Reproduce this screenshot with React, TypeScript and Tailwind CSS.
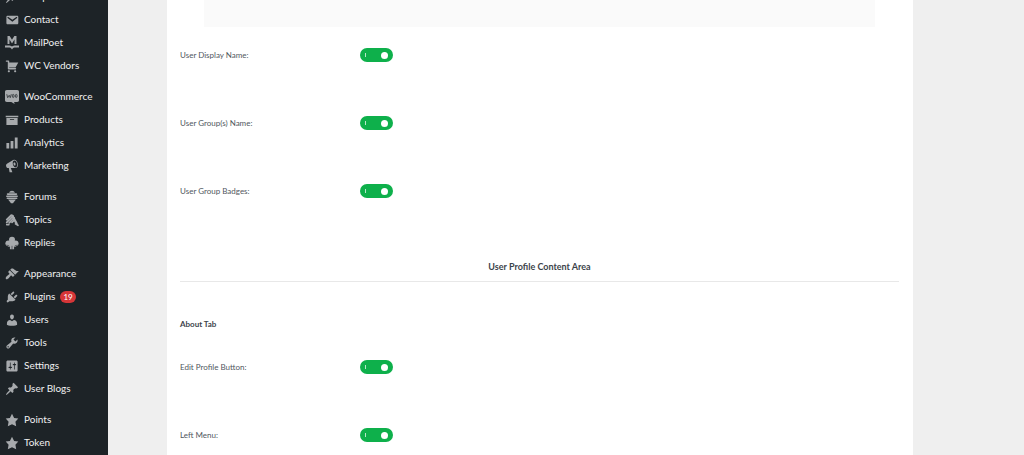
import { useState } from "react"
import type { ReactNode } from "react"

interface MenuItem {
  label: string
  icon: ReactNode
  count?: number
}

const icons = {
  email: <path d="M3.87 4h13.25C18.37 4 19 4.59 19 5.79v8.42c0 1.19-.63 1.79-1.88 1.79H3.87c-1.25 0-1.88-.6-1.88-1.79V5.79c0-1.2.63-1.79 1.88-1.79zm6.62 8.6l6.74-5.53c.24-.2.43-.66.13-1.07-.29-.41-.82-.42-1.17-.17l-5.7 3.86L4.8 5.83c-.35-.25-.88-.24-1.17.17-.3.41-.11.87.13 1.07z" />,
  mailpoet: (
    <g fill="none" stroke="currentColor">
      <path strokeWidth="2.8" d="M5 11.5V0l5 8 5-8v11.5" />
      <path strokeWidth="2.6" d="M0 15h6.5c1.6 0 2.6.7 3.5 2 .9-1.3 1.9-2 3.5-2H20" />
    </g>
  ),
  cart: <path d="M6 13h9c.55 0 1 .45 1 1s-.45 1-1 1H5c-.55 0-1-.45-1-1V4H2c-.55 0-1-.45-1-1s.45-1 1-1h3c.55 0 1 .45 1 1v2h13l-4 7H6v1zm-.5 3c.83 0 1.5.67 1.5 1.5S6.33 19 5.5 19 4 18.33 4 17.5 4.67 16 5.5 16zm9 0c.83 0 1.5.67 1.5 1.5s-.67 1.5-1.5 1.5-1.5-.67-1.5-1.5.67-1.5 1.5-1.5z" />,
  woo: (
    <>
      <path d="M2.5 0h15C19 0 20 1 20 2.500v12c0 1.500-1 2.500-2.500 2.500H13l.8 3L9 17H2.500C1 17 0 16 0 14.500v-12C0 1 1 0 2.500 0z" />
      <g fill="none" stroke="#1d2327" strokeWidth="1" strokeLinejoin="round">
        <path d="M2.500 6l1.300 5L6 7.500 7.500 11 9 6" />
        <ellipse cx="11.700" cy="8.500" rx="1.300" ry="2.300" />
        <ellipse cx="16" cy="8.500" rx="1.300" ry="2.300" />
      </g>
    </>
  ),
  archive: <path d="M19 4v2H1V4h18zM2 7h16v10H2V7zm11 3V9H7v1h6z" />,
  chart: <path d="M18 18V2h-4v16h4zm-6 0V7H8v11h4zm-6 0v-8H2v8h4z" />,
  megaphone: <path d="M18.15 5.94c.46 1.62.38 3.22-.02 4.48-.42 1.28-1.26 2.18-2.3 2.48-.16.06-.26.06-.4.06-.06.02-.12.02-.18.02-.06.02-.14.02-.22.02h-6.8l2.22 5.5c.02.14-.06.26-.14.34-.08.1-.24.16-.34.16H6.95c-.1 0-.26-.06-.34-.16-.08-.08-.16-.2-.14-.34l-1-5.5H4.25l-.02-.02c-.5.06-1.08-.18-1.54-.62s-.88-1.08-1.06-1.88c-.24-.8-.2-1.56-.02-2.2.18-.62.58-1.08 1.06-1.3l.02-.02 9-5.4c.1-.06.18-.1.24-.16.06-.04.14-.08.24-.12.16-.08.28-.12.5-.18 1.04-.3 2.24.1 3.22.98s1.84 2.24 2.26 3.86zm-2.58 5.98h-.02c.4-.1.74-.34 1.04-.7.58-.7.86-1.76.86-3.04 0-.64-.1-1.3-.28-1.98-.34-1.36-1.02-2.5-1.78-3.24s-1.68-1.1-2.46-.88c-.82.22-1.4.96-1.7 2-.32 1.04-.28 2.36.06 3.72.38 1.36 1 2.5 1.8 3.24.78.74 1.62 1.1 2.48.88zm-2.54-7.08c.22-.04.42-.02.62.04.38.16.76.48 1.02 1s.42 1.2.42 1.78c0 .3-.04.56-.12.8-.18.48-.44.84-.86.94-.34.1-.8-.06-1.14-.4s-.64-.86-.78-1.5c-.18-.62-.12-1.24.02-1.72s.48-.84.82-.94z" />,
  forums: <path d="M10 1c2 0 3.500 1.200 4.200 2.800H5.800C6.500 2.200 8 1 10 1zM4 4.500h12c1 0 1.500.5 1.500 1.300S17 7 16 7H4c-1 0-1.500-.4-1.500-1.200S3 4.500 4 4.500zM2.500 7.700h15c.7 0 1 .5 1 1.100s-.4 1.200-1 1.200h-15c-.6 0-1-.6-1-1.200s.3-1.100 1-1.100zM3.200 10.700h13.600c.6 0 1 .5 1 1.100s-.4 1.200-1 1.200H3.200c-.6 0-1-.6-1-1.200s.4-1.100 1-1.100zM4.500 13.700h11C14.500 16 12 17.500 11.500 19h-3C8 17.500 5.500 16 4.500 13.700z" />,
  topics: (
    <g fill="none" stroke="currentColor" strokeLinecap="round">
      <path strokeWidth="2.600" d="M2.500 9.500l6.500-6.500M2.500 13.500l9-9M6 14l7-7" />
      <path strokeWidth="3.400" d="M10.500 4l6 11" />
      <path strokeWidth="2.400" d="M10 13.500l3-3M15 15.500l3.500 2M2.500 16.500h3" />
    </g>
  ),
  replies: (
    <>
      <circle cx="10" cy="5.500" r="4.300" />
      <circle cx="4.800" cy="10.500" r="4.200" />
      <circle cx="15.200" cy="10.500" r="4.200" />
      <path d="M6 7h8l2 8-3 .5V19H7v-3.500L4 15z" />
      <path d="M10 14v5M2 13l4 1M18 13l-4 1" stroke="#1d2327" strokeWidth=".8" />
    </>
  ),
  appearance: <path d="M14.48 11.06L7.41 3.99l1.5-1.5c.5-.56 2.3-.47 3.51.32 1.21.8 1.43 1.28 2.91 2.1 1.18.64 2.45 1.26 4.45.85zm-.71.71L6.7 4.7 4.93 6.47c-.39.39-.39 1.02 0 1.41l1.06 1.06c.39.39.39 1.03 0 1.42-.6.6-1.43 1.11-2.21 1.69-.35.26-.7.53-1.01.84C1.43 14.23.4 16.08 1.4 17.07c.99 1 2.84-.03 4.18-1.36.31-.31.58-.66.85-1.02.57-.78 1.08-1.61 1.69-2.21.39-.39 1.02-.39 1.41 0l1.06 1.06c.39.39 1.02.39 1.41 0z" />,
  plugins: <path d="M13.11 4.36L9.87 7.6 8 5.73l3.24-3.24c.35-.34 1.05-.2 1.56.32.52.51.66 1.21.31 1.55zm-8 1.77l.91-1.12 9.01 9.01-1.19.84c-.71.71-2.63 1.16-3.82 1.16H6.14L4.9 17.26c-.59.59-1.54.59-2.12 0-.59-.58-.59-1.53 0-2.12l1.24-1.24v-3.88c0-1.13.4-3.19 1.09-3.89zm7.26 3.97l3.24-3.24c.34-.35 1.04-.21 1.55.31.52.51.66 1.21.31 1.55l-3.24 3.25z" />,
  users: <path d="M10 9.250c-2.270 0-2.730-3.440-2.730-3.440C7 4.020 7.820 2 9.970 2c2.160 0 2.980 2.020 2.710 3.810 0 0-.41 3.440-2.680 3.440zm0 2.570L12.720 10c2.390 0 4.520 2.330 4.520 4.530v2.490s-3.650 1.130-7.240 1.130c-3.650 0-7.240-1.130-7.240-1.130v-2.490c0-2.250 1.940-4.480 4.470-4.480z" />,
  tools: <path d="M16.68 9.77c-1.34 1.34-3.3 1.67-4.95.99l-5.41 6.52c-.99.99-2.59.99-3.58 0s-.99-2.59 0-3.57l6.52-5.42c-.68-1.65-.35-3.61.99-4.95 1.28-1.28 3.12-1.62 4.72-1.06l-2.89 2.89 2.82 2.82 2.86-2.87c.53 1.58.18 3.39-1.08 4.65zM3.81 16.21c.4.39 1.04.39 1.43 0 .4-.4.4-1.04 0-1.43-.39-.4-1.03-.4-1.43 0-.39.39-.39 1.03 0 1.43z" />,
  settings: <path d="M18 16V4c0-1.1-.9-2-2-2H4c-1.1 0-2 .9-2 2v12c0 1.1.9 2 2 2h12c1.1 0 2-.9 2-2zM8 11h1c.55 0 1 .45 1 1s-.45 1-1 1H8v1.5c0 .28-.22.5-.5.5s-.5-.22-.5-.5V13H6c-.55 0-1-.45-1-1s.45-1 1-1h1V5.5c0-.28.22-.5.5-.5s.5.22.5.5V11zm5-2h-1c-.55 0-1-.45-1-1s.45-1 1-1h1V5.5c0-.28.22-.5.5-.5s.5.22.5.5V7h1c.55 0 1 .45 1 1s-.45 1-1 1h-1v5.5c0 .28-.22.5-.5.5s-.5-.22-.5-.5V9z" />,
  pin: <path d="M10.44 3.02l1.82-1.82 6.36 6.35-1.83 1.82c-1.05-.68-2.48-.57-3.41.36l-.75.75c-.92.93-1.04 2.35-.35 3.41l-1.83 1.82-2.41-2.41-2.8 2.79c-.42.42-3.38 2.71-3.8 2.29s1.86-3.39 2.28-3.81l2.79-2.79L4.1 9.36l1.83-1.82c1.05.69 2.48.57 3.4-.36l.75-.75c.93-.92 1.05-2.35.36-3.41z" />,
  star: <path d="M10 1l3 6 6 .75-4.12 4.62L16 19l-6-3-6 3 1.13-6.63L1 7.75 7 7z" />,
}

const menuGroups: MenuItem[][] = [
  [
    { label: "Templates", icon: icons.pin },
    { label: "Contact", icon: icons.email },
    { label: "MailPoet", icon: icons.mailpoet },
    { label: "WC Vendors", icon: icons.cart },
  ],
  [
    { label: "WooCommerce", icon: icons.woo },
    { label: "Products", icon: icons.archive },
    { label: "Analytics", icon: icons.chart },
    { label: "Marketing", icon: icons.megaphone },
  ],
  [
    { label: "Forums", icon: icons.forums },
    { label: "Topics", icon: icons.topics },
    { label: "Replies", icon: icons.replies },
  ],
  [
    { label: "Appearance", icon: icons.appearance },
    { label: "Plugins", icon: icons.plugins, count: 19 },
    { label: "Users", icon: icons.users },
    { label: "Tools", icon: icons.tools },
    { label: "Settings", icon: icons.settings },
    { label: "User Blogs", icon: icons.pin },
  ],
  [
    { label: "Points", icon: icons.star },
    { label: "Token", icon: icons.star },
  ],
]

function Sidebar() {
  return (
    <nav className="flex w-[108px] shrink-0 flex-col justify-end gap-2 bg-[#1d2327] pb-px">
      {menuGroups.map((group) => (
        <ul key={group[0].label}>
          {group.map((item) => (
            <li key={item.label}>
              <a href="#" className="flex h-[23px] items-center gap-[5px] pl-[5px] text-[10px] text-[#f0f0f1]">
                <svg viewBox="0 0 20 20" className="h-[14px] w-[14px] shrink-0 fill-current text-[#a7aaad]">
                  {item.icon}
                </svg>
                <span>{item.label}</span>
                {item.count && (
                  <span className="flex h-3 items-center rounded-full bg-[#d63638] px-[3px] text-[8px] text-white">
                    {item.count}
                  </span>
                )}
              </a>
            </li>
          ))}
        </ul>
      ))}
    </nav>
  )
}

function ToggleRow({ label }: { label: string }) {
  const [on, setOn] = useState(true)

  return (
    <label className="flex h-[68px] items-center text-[8px] text-[#50575e]">
      <span className="w-1/4">{label}</span>
      <input
        type="checkbox"
        role="switch"
        checked={on}
        onChange={() => setOn(!on)}
        className="peer sr-only"
      />
      <span className="flex h-[14px] w-[33px] flex-row-reverse items-center justify-between rounded-full bg-gray-400 px-[5px] peer-checked:flex-row peer-checked:bg-[#0eb04b]">
        <span className="h-1 w-px bg-white/70" />
        <span className="h-[7px] w-[7px] rounded-full bg-white" />
      </span>
    </label>
  )
}

export default function App() {
  return (
    <div className="flex h-screen overflow-hidden bg-[#efefef] font-['Lato','Noto_Sans',sans-serif]">
      <Sidebar />
      <main className="min-w-0 flex-1 pr-[111px] pl-[59px]">
        <div className="min-h-full bg-white pr-[14px] pl-[13px]">
          <div className="mx-6 h-[27px] bg-[#fafafa]" />
          <section className="-mt-[6px]">
            <ToggleRow label="User Display Name:" />
            <ToggleRow label="User Group(s) Name:" />
            <ToggleRow label="User Group Badges:" />
          </section>
          <h2 className="mt-9 border-b border-[#e8e8e8] pb-2 text-center text-[9px] leading-3 font-bold text-[#3c434a]">
            User Profile Content Area
          </h2>
          <section>
            <h3 className="mt-9 text-[8px] leading-3 font-bold text-[#3c434a]">About Tab</h3>
            <div className="mt-[3px]">
              <ToggleRow label="Edit Profile Button:" />
              <ToggleRow label="Left Menu:" />
            </div>
          </section>
        </div>
      </main>
    </div>
  )
}
